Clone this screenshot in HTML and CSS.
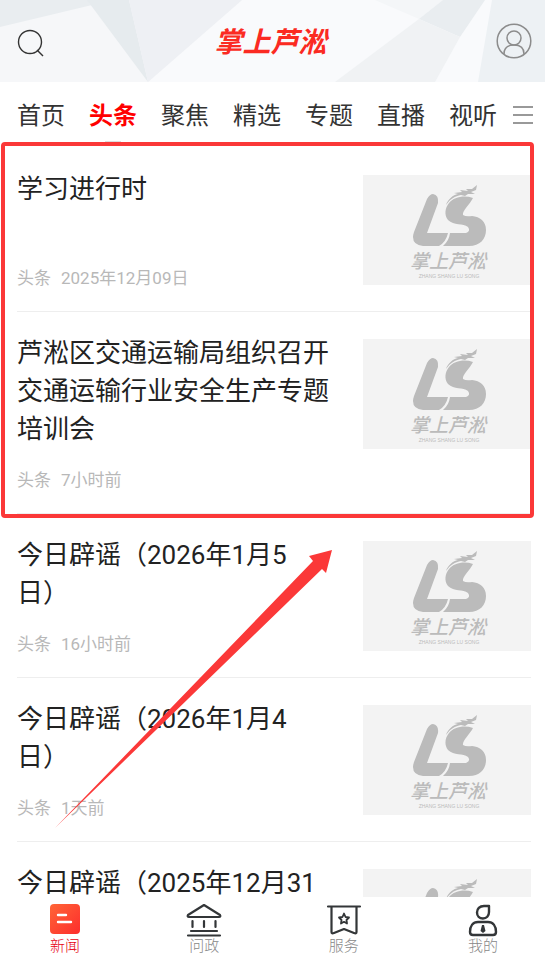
FILE: index.html
```html
<!DOCTYPE html>
<html lang="zh-CN">
<head>
	<meta charset="UTF-8">
	<meta name="viewport" content="width=device-width, initial-scale=1">
	<title>掌上芦淞</title>
	<link rel="stylesheet" href="styles.css">
</head>
<body>
	<header class="header">
		<svg class="header-bg" viewBox="0 0 545 82" preserveAspectRatio="none" aria-hidden="true">
			<path fill="#e9edf0" d="M0 0H113L0 27Z"/>
			<path fill="#f9fafc" d="M242 0H545V82H148Z"/>
			<path fill="#e6ebee" d="M87 0H129L148 82Z"/>
			<path fill="#eef0f4" d="M129 0H242L148 82Z"/>
			<path fill="#f4f6f8" d="M375 0H443L419 19Z"/>
			<path fill="#e9edf0" d="M419 19L443 0H485L460 37Z"/>
			<path fill="#f0f2f4" d="M335 82L419 19L460 37L435 82Z"/>
			<path fill="#edf1f4" d="M492 0H545V82H478Z"/>
		</svg>
		<button class="icon-btn" type="button" aria-label="搜索">
			<svg width="28" height="28" viewBox="0 0 28 28" fill="none" stroke="#333" stroke-width="1.4">
				<circle cx="13" cy="13" r="11.5"/>
				<path d="M20 21L26 27"/>
			</svg>
		</button>
		<h1 class="logo">掌上芦淞</h1>
		<button class="icon-btn" type="button" aria-label="个人中心">
			<svg width="36" height="36" viewBox="0 0 36 36" fill="none" stroke="#8c8c8c" stroke-width="1.5">
				<circle cx="18" cy="18" r="16.8"/>
				<circle cx="18" cy="15" r="7"/>
				<path d="M8 31C8 25 12 22 18 22S28 25 28 31"/>
			</svg>
		</button>
	</header>

	<nav class="nav">
		<a href="#">首页</a>
		<a href="#" class="active">头条</a>
		<a href="#">聚焦</a>
		<a href="#">精选</a>
		<a href="#">专题</a>
		<a href="#">直播</a>
		<a href="#">视听</a>
		<button class="icon-btn menu" type="button" aria-label="全部栏目">
			<svg width="20" height="18" viewBox="0 0 20 18" stroke="#999" stroke-width="2">
				<path d="M0 1H20M0 9H20M0 17H20"/>
			</svg>
		</button>
	</nav>

	<main class="list">
		<section class="marked">
			<a class="item" href="#">
				<div class="info">
					<h2>学习进行时</h2>
					<p class="meta"><span>头条</span><span>2025年12月09日</span></p>
				</div>
				<svg class="thumb" aria-hidden="true">
					<g id="cover">
						<path d="M64 24Q67 19 70 19Q76 20 75 28L64 58H85Q83 67 76 71H60Q50 70 50 62Q50 60 51 57Z"/>
						<path d="M110 23C101 20 91 22 86 28C82 33 81 40 85 45C91 51 100 48 105 52Q108 56 103 58H87Q86 66 80 71H106C117 71 123 64 123 55C123 46 117 42 109 41Q103 42 100 40C99 36 107 29 110 23Z"/>
						<path d="M83 30C85 24 90 20 95 19L91 18L99 17L97 15L105 16L103 14L109 14L114 10L113 15L108 17L112 19L105 19L102 21L98 20C92 21 87 24 83 30Z"/>
						<text class="cover-name" x="85" y="93" text-anchor="middle">掌上芦淞</text>
						<text class="cover-pinyin" x="86" y="103" text-anchor="middle">ZHANG SHANG LU SONG</text>
					</g>
				</svg>
			</a>
			<a class="item" href="#">
				<div class="info">
					<h2>芦淞区交通运输局组织召开交通运输行业安全生产专题培训会</h2>
					<p class="meta"><span>头条</span><span>7小时前</span></p>
				</div>
				<svg class="thumb" aria-hidden="true"><use href="#cover"/></svg>
			</a>
		</section>
		<section class="more">
			<a class="item" href="#">
				<div class="info">
					<h2>今日辟谣（2026年1月5日）</h2>
					<p class="meta"><span>头条</span><span>16小时前</span></p>
				</div>
				<svg class="thumb" aria-hidden="true"><use href="#cover"/></svg>
			</a>
			<a class="item" href="#">
				<div class="info">
					<h2>今日辟谣（2026年1月4日）</h2>
					<p class="meta"><span>头条</span><span>1天前</span></p>
				</div>
				<svg class="thumb" aria-hidden="true"><use href="#cover"/></svg>
			</a>
			<a class="item" href="#">
				<div class="info">
					<h2>今日辟谣（2025年12月31日）</h2>
				</div>
				<svg class="thumb" aria-hidden="true"><use href="#cover"/></svg>
			</a>
			<svg class="arrow" viewBox="0 0 278 278" aria-hidden="true">
				<path fill="#fb3838" d="M0 278L258 11L254 6L277 0L271 23L267 19Z"/>
			</svg>
		</section>
	</main>

	<footer class="tabbar">
		<a href="#" class="active">
			<svg width="36" height="34" viewBox="0 0 36 34">
				<defs>
					<linearGradient id="news" x1="0" y1="0" x2="1" y2="1">
						<stop offset="0" stop-color="#ff6536"/>
						<stop offset="1" stop-color="#fd2d2d"/>
					</linearGradient>
				</defs>
				<rect x="3" y="1" width="30" height="30" rx="4" fill="url(#news)"/>
				<path d="M11 12H19M11 19H24" stroke="#fff" stroke-width="2.4" stroke-linecap="round"/>
			</svg>
			新闻
		</a>
		<a href="#">
			<svg width="36" height="34" viewBox="0 0 36 34" fill="none" stroke="#333638" stroke-width="2.2" stroke-linecap="round" stroke-linejoin="round">
				<path d="M18 2L34 12Q35 14 33 14H3Q1 14 2 12ZM6.500 18V24M18 18V24M29.500 18V24M5 28H31M2 32.500H34"/>
			</svg>
			问政
		</a>
		<a href="#">
			<svg width="36" height="34" viewBox="0 0 36 34" fill="none" stroke="#333638" stroke-width="2.2" stroke-linecap="round" stroke-linejoin="round">
				<path d="M2 3.500H34M5.500 4V29Q5.500 31 8 30L18 26L28 30Q30.500 31 30.500 29V4"/>
				<path stroke-width="1.8" d="M18 10.500L19.500 14L23 14.500L20.500 17L21 20.500L18 18.800L15 20.500L15.500 17L13 14.500L16.500 14Z"/>
			</svg>
			服务
		</a>
		<a href="#">
			<svg width="36" height="34" viewBox="0 0 36 34" fill="none" stroke="#333638" stroke-width="2.4" stroke-linejoin="round">
				<path d="M24 3V9C24 13 21.500 15.500 18 15.500S12 13 12 9.500S14.500 3 19 3ZM13 19H23C28 19 31 23 31 29Q31 32 28 32H8Q5 32 5 29C5 23 8 19 13 19Z"/>
				<path fill="#333638" stroke="none" d="M17 22H19L19.500 24L20.500 28L18 30L15.500 28L16.500 24Z"/>
			</svg>
			我的
		</a>
	</footer>
</body>
</html>
```
FILE: styles.css
```css
* {
	box-sizing: border-box;
}
body {
	display: flex;
	flex-direction: column;
	height: 100vh;
	margin: 0;
	font-family: Roboto, "Noto Sans CJK SC", sans-serif;
	background-color: #fff;
	color: #222;
}
a {
	color: inherit;
	text-decoration: none;
}
h1, h2, p {
	margin: 0;
}
.icon-btn {
	display: flex;
	padding: 0;
	border: none;
	background: none;
	cursor: pointer;
}

/* 顶部 */
.header {
	position: relative;
	flex: none;
	display: flex;
	align-items: center;
	justify-content: space-between;
	height: 82px;
	padding: 0 13px 0 17px;
	background-color: #f6f7f9;
}
.header-bg {
	position: absolute;
	left: 0;
	top: 0;
	width: 100%;
	height: 100%;
}
.header .icon-btn,
.logo {
	position: relative;
}
.header .icon-btn:first-of-type {
	padding-top: 4px;
}
.logo {
	padding-top: 4px;
	color: #fb2a22;
	font-size: 28px;
	font-style: italic;
	font-weight: 700;
	line-height: 40px;
}

/* 栏目 */
.nav {
	flex: none;
	display: flex;
	align-items: center;
	justify-content: space-between;
	height: 60px;
	padding: 0 12px 0 17px;
	font-size: 24px;
	line-height: 36px;
	color: #333;
}
.nav a {
	position: relative;
	padding: 16px 0 8px;
}
.nav .active {
	color: #f00;
	font-weight: 700;
}
.nav .active::after {
	content: "";
	position: absolute;
	left: 50%;
	bottom: 0;
	width: 16px;
	height: 1px;
	margin-left: -8px;
	background-color: #ddd;
}
.menu {
	margin: 6px 0 0 -8px;
}

/* 新闻列表 */
.list {
	flex: 1;
	min-height: 0;
	padding: 6px 14px 0 17px;
	overflow: hidden;
}
.marked, .more {
	position: relative;
}
.marked::after {
	content: "";
	position: absolute;
	inset: -6px -3px -4px -16px;
	border: 4px solid #fb3838;
	border-radius: 4px;
	pointer-events: none;
}
.arrow {
	position: absolute;
	left: 38px;
	top: 36px;
	width: 278px;
	height: 278px;
	pointer-events: none;
}
.item {
	display: flex;
	align-items: flex-start;
	gap: 27px;
	padding: 22px 0;
	border-bottom: 1px solid #eee;
}
.info {
	flex: 1;
}
.info h2 {
	min-height: 76px;
	font-size: 26px;
	font-weight: 400;
	line-height: 38px;
	text-spacing-trim: space-all;
}
.meta {
	display: flex;
	gap: 10px;
	margin-top: 21px;
	color: #b8b8b8;
	font-size: 17px;
	line-height: 22px;
}
.thumb {
	flex: none;
	width: 168px;
	height: 110px;
	margin-top: 5px;
	background-color: #f3f3f3;
	fill: #bbb;
}
.cover-name {
	font-size: 19px;
	font-style: italic;
	font-weight: 500;
}
.cover-pinyin {
	font-family: "Liberation Sans", sans-serif;
	font-size: 5px;
}

/* 底部导航 */
.tabbar {
	flex: none;
	display: flex;
	justify-content: space-between;
	padding: 6px 44px 6px 47px;
	background-color: #fff;
}
.tabbar a {
	display: flex;
	flex-direction: column;
	align-items: center;
	color: #888;
	font-size: 15px;
	font-weight: 300;
	line-height: 18px;
}
.tabbar .active {
	color: #e60012;
}
```
